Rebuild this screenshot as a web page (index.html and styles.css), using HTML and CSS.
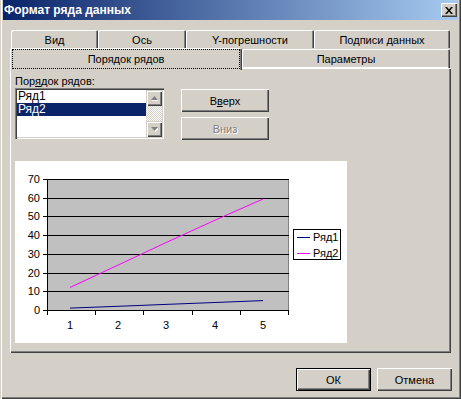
FILE: index.html
```html
<!DOCTYPE html>
<html lang="ru">
<head>
    <meta charset="UTF-8">
    <title>Формат ряда данных</title>
    <link rel="stylesheet" href="styles.css">
</head>
<body>
    <div class="window">
        <div class="titlebar">
            <span class="title">Формат ряда данных</span>
            <span class="close-btn">
                <svg width="8" height="7" viewBox="0 0 8 7">
                    <path d="M0 0h2l2 2.5 2-2.5h2l-3 3.5 3 3.5h-2l-2-2.5-2 2.5h-2l3-3.5z" fill="#000"/>
                </svg>
            </span>
        </div>

        <div class="content">
            <div class="tabs">
                <div class="tab-row tab-row-back">
                    <div class="tab tab-vid">Вид</div>
                    <div class="tab tab-axis">Ось</div>
                    <div class="tab tab-errors">Y-погрешности</div>
                    <div class="tab tab-labels">Подписи данных</div>
                </div>
                <div class="tab-row tab-row-front">
                    <div class="tab tab-active tab-order"><span class="focus">Порядок рядов</span></div>
                    <div class="tab tab-params">Параметры</div>
                </div>
            </div>

            <div class="panel">
                <div class="field-label">Пор<u>я</u>док рядов:</div>
                <div class="order-row">
                    <div class="listbox">
                        <div class="list-items">
                            <div class="list-item">Ряд1</div>
                            <div class="list-item selected">Ряд2</div>
                        </div>
                        <div class="scrollbar">
                            <div class="scroll-btn">
                                <svg width="7" height="5" viewBox="0 0 7 5">
                                    <path d="M1 5h7l-3.5-4z" fill="#fff"/>
                                    <path d="M0 4h7l-3.5-4z" fill="#808080"/>
                                </svg>
                            </div>
                            <div class="scroll-track"></div>
                            <div class="scroll-btn">
                                <svg width="7" height="5" viewBox="0 0 7 5">
                                    <path d="M1 1h7l-3.5 4z" fill="#fff"/>
                                    <path d="M0 0h7l-3.5 4z" fill="#808080"/>
                                </svg>
                            </div>
                        </div>
                    </div>
                    <div class="order-buttons">
                        <button class="btn btn-order">В<u>в</u>ерх</button>
                        <button class="btn btn-order" disabled>Вниз</button>
                    </div>
                </div>

                <div class="chart">
                    <svg width="332" height="182" viewBox="0 0 332 182">
                        <rect x="32.5" y="18.5" width="241" height="131" fill="#c0c0c0" stroke="#808080"/>
                        <!-- линии сетки -->
                        <path d="M32 18.5H274M32 37.5H274M32 55.5H274M32 74.5H274M32 93.5H274M32 112.5H274M32 130.5H274" stroke="#000"/>
                        <!-- оси и засечки -->
                        <path d="M32.5 18V150M32 149.5H274" stroke="#000"/>
                        <path d="M28 18.5H32M28 37.5H32M28 55.5H32M28 74.5H32M28 93.5H32M28 112.5H32M28 130.5H32M28 149.5H32" stroke="#000"/>
                        <path d="M32.5 150V154M80.5 150V154M128.5 150V154M177.5 150V154M225.5 150V154M273.5 150V154" stroke="#000"/>
                        <g class="axis-text" text-anchor="end">
                            <text x="25" y="22">70</text>
                            <text x="25" y="41">60</text>
                            <text x="25" y="59">50</text>
                            <text x="25" y="78">40</text>
                            <text x="25" y="97">30</text>
                            <text x="25" y="116">20</text>
                            <text x="25" y="134">10</text>
                            <text x="25" y="153">0</text>
                        </g>
                        <g class="axis-text" text-anchor="middle">
                            <text x="55" y="168">1</text>
                            <text x="103" y="168">2</text>
                            <text x="151" y="168">3</text>
                            <text x="200" y="168">4</text>
                            <text x="248" y="168">5</text>
                        </g>
                        <!-- ряды -->
                        <polyline points="55,147.1 103,145.3 151,143.4 200,141.5 248,139.6" fill="none" stroke="#000080"/>
                        <polyline points="55,126.5 103,104.1 151,81.6 200,59.2 248,38" fill="none" stroke="#ff00ff"/>
                        <!-- легенда -->
                        <rect x="278.5" y="68.5" width="47" height="30" fill="#fff" stroke="#000"/>
                        <path d="M282 76.5H295" stroke="#000080"/>
                        <path d="M282 92.5H295" stroke="#ff00ff"/>
                        <g class="legend-text">
                            <text x="298" y="80">Ряд1</text>
                            <text x="298" y="96">Ряд2</text>
                        </g>
                    </svg>
                </div>
            </div>

            <div class="footer">
                <button class="btn btn-default">ОК</button>
                <button class="btn btn-dialog">Отмена</button>
            </div>
        </div>
    </div>
</body>
</html>
```

FILE: styles.css
```css
body {
    margin: 0;
    font-family: "Liberation Sans", Arial, sans-serif;
    font-size: 11px;
    background: #d4d0c8;
    color: #000;
}
.window {
    width: 461px;
    height: 399px;
    box-sizing: border-box;
    padding: 0 3px 3px;
    background: #d4d0c8;
    box-shadow: inset 1px 0 #d4d0c8, inset 2px 0 #fff, inset -1px -1px #404040, inset -2px -2px #808080;
}
.titlebar {
    height: 20px;
    display: flex;
    align-items: center;
    justify-content: space-between;
    padding: 0 1px 0 1px;
    background: linear-gradient(to right, #0a246a, #a6caf0);
    color: #fff;
    font-size: 12px;
    font-weight: bold;
}
.close-btn {
    width: 16px;
    height: 14px;
    display: flex;
    align-items: center;
    justify-content: center;
    background: #d4d0c8;
    box-shadow: inset 1px 1px #fff, inset -1px -1px #404040, inset -2px -2px #808080;
}
.content {
    padding: 10px 7px 0;
}

/* вкладки */
.tab-row {
    display: flex;
}
.tab-row-back {
    height: 18px;
    margin-left: 1px;
}
.tab-row-front {
    height: 20px;
}
.tab {
    box-sizing: border-box;
    display: flex;
    align-items: center;
    justify-content: center;
    border-radius: 2px 2px 0 0;
    box-shadow: inset 1px 1px #fff, inset -1px 0 #404040, inset -2px 0 #808080;
    padding-top: 1px;
}
.tab-vid { width: 87px; }
.tab-axis { width: 88px; }
.tab-errors { width: 128px; }
.tab-labels { width: 136px; }
.tab-order { width: 232px; }
.tab-params {
    width: 208px;
    margin-top: 1px;
    box-shadow: inset 1px 1px #fff, inset -1px 0 #404040, inset -2px 0 #808080, inset 0 -1px #fff;
}
.tab-active {
    position: relative;
    z-index: 1;
    height: 22px;
    padding: 2px 3px 2px;
    background: #d4d0c8;
}
.focus {
    flex: 1;
    align-self: stretch;
    display: flex;
    align-items: center;
    justify-content: center;
    outline: 1px dotted #000;
}

/* панель */
.panel {
    height: 285px;
    box-sizing: border-box;
    padding: 6px 5px 0;
    box-shadow: inset 1px 1px #fff, inset -1px -1px #404040, inset -2px -2px #808080;
}
.field-label {
    height: 14px;
    line-height: 14px;
}
.order-row {
    display: flex;
    gap: 17px;
}
.listbox {
    width: 149px;
    height: 51px;
    box-sizing: border-box;
    display: flex;
    padding: 2px;
    background: #fff;
    box-shadow: inset 1px 1px #808080, inset 2px 2px #404040, inset -1px -1px #fff, inset -2px -2px #d4d0c8;
}
.list-items {
    flex: 1;
    font-size: 12px;
}
.list-item {
    height: 13px;
    line-height: 13px;
    padding-left: 1px;
}
.list-item.selected {
    background: #0a246a;
    color: #fff;
}
.scrollbar {
    width: 16px;
    display: flex;
    flex-direction: column;
}
.scroll-btn {
    height: 16px;
    display: flex;
    align-items: center;
    justify-content: center;
    background: #d4d0c8;
    box-shadow: inset 1px 1px #d4d0c8, inset 2px 2px #fff, inset -1px -1px #404040, inset -2px -2px #808080;
}
.scroll-track {
    flex: 1;
    background: repeating-conic-gradient(#fff 0 25%, #d4d0c8 0 50%) 0 0 / 2px 2px;
}
.order-buttons {
    display: flex;
    flex-direction: column;
    gap: 5px;
    padding-top: 1px;
}
.btn {
    font-family: inherit;
    font-size: 11px;
    color: #000;
    background: #d4d0c8;
    border: none;
    padding: 0;
    box-shadow: inset 1px 1px #fff, inset -1px -1px #404040, inset -2px -2px #808080;
}
.btn-order {
    width: 88px;
    height: 23px;
}
.btn:disabled {
    color: #808080;
    text-shadow: 1px 1px #fff;
}
.chart {
    width: 332px;
    height: 182px;
    margin-top: 21px;
    background: #fff;
}
.chart svg {
    display: block;
}
.axis-text, .legend-text {
    font-family: "Liberation Sans", Arial, sans-serif;
    font-size: 11px;
}

/* кнопки диалога */
.footer {
    display: flex;
    justify-content: flex-end;
    gap: 6px;
    margin-top: 15px;
    margin-right: -1px;
}
.btn-dialog, .btn-default {
    width: 75px;
    height: 23px;
}
.btn-default {
    box-shadow: inset 0 0 0 1px #000, inset 2px 2px #fff, inset -2px -2px #404040, inset -3px -3px #808080;
}
```
